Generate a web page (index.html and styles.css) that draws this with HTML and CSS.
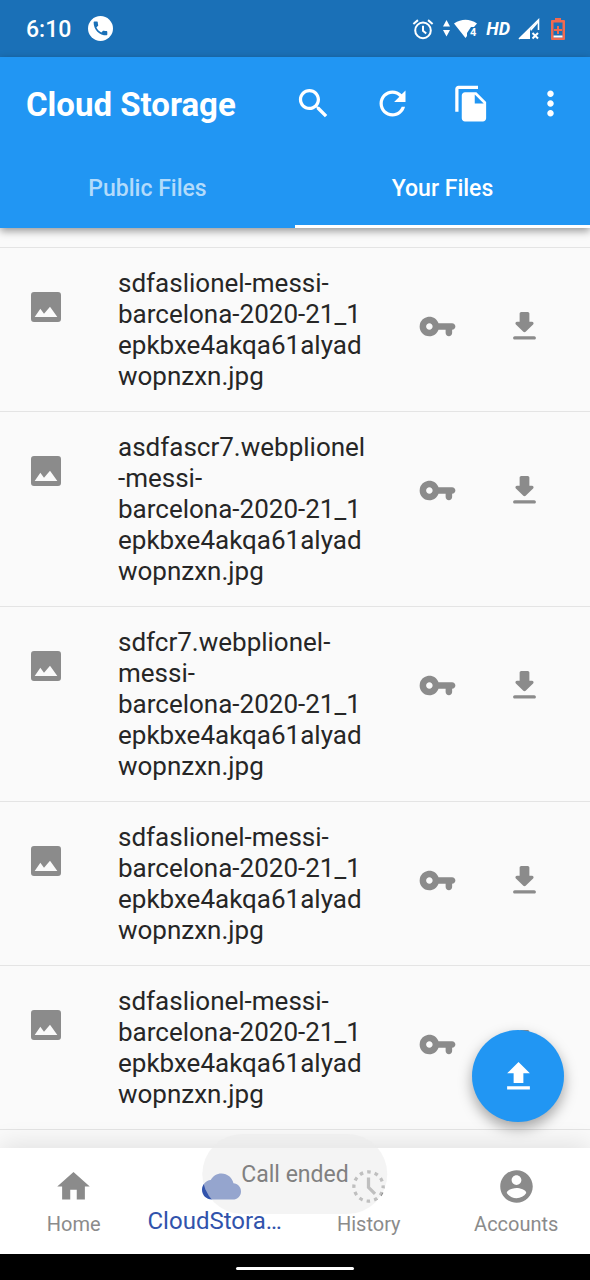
FILE: index.html
```html
<!DOCTYPE html>
<html lang="en">
<head>
<meta charset="utf-8">
<meta name="viewport" content="width=device-width, initial-scale=1">
<title>Cloud Storage</title>
<link rel="stylesheet" href="styles.css">
</head>
<body>
<svg class="sprite" aria-hidden="true">
  <symbol id="image" viewBox="0 0 90 90"><path fill-rule="evenodd" d="M9 0h72q9 0 9 9v72q0 9-9 9H9q-9 0-9-9V9q0-9 9-9zM11 75h68L57 44 39 65 28 50z"/></symbol>
  <symbol id="key" viewBox="0 0 24 24"><path d="M12.65 10C11.7 7.31 8.9 5.5 5.77 6.12c-2.29.46-4.15 2.29-4.63 4.58C.32 14.57 3.26 18 7 18c2.61 0 4.83-1.67 5.65-4H17v2c0 1.1.9 2 2 2s2-.9 2-2v-2c1.1 0 2-.9 2-2s-.9-2-2-2h-8.35zM7 14c-1.1 0-2-.9-2-2s.9-2 2-2 2 .9 2 2-.9 2-2 2z"/></symbol>
  <symbol id="download" viewBox="0 0 24 24"><path d="M16.59 9H15V4c0-.55-.45-1-1-1h-4c-.55 0-1 .45-1 1v5H7.41c-.89 0-1.34 1.08-.71 1.71l4.59 4.59c.39.39 1.02.39 1.41 0l4.59-4.59c.63-.63.19-1.71-.7-1.71zM5 19c0 .55.45 1 1 1h12c.55 0 1-.45 1-1s-.45-1-1-1H6c-.55 0-1 .45-1 1z"/></symbol>
</svg>
<div class="app">
  <div class="status">
    <div class="status-group">
      <span class="clock">6:10</span>
      <svg class="call" viewBox="0 0 24 24"><circle cx="12" cy="12" r="12" fill="#fff"/><path transform="translate(3.200 3.200) scale(.73)" fill="#1a70b7" d="M20 15.500c-1.200 0-2.400-.2-3.600-.6-.3-.1-.7 0-1 .2l-2.200 2.200c-2.800-1.400-5.100-3.800-6.600-6.600l2.200-2.200c.3-.3.4-.7.2-1C8.700 6.400 8.500 5.200 8.500 4c0-.6-.4-1-1-1H4c-.6 0-1 .4-1 1 0 9.400 7.600 17 17 17 .6 0 1-.4 1-1v-3.500c0-.6-.4-1-1-1z"/></svg>
    </div>
    <div class="status-group status-right">
      <svg class="alarm" viewBox="0 0 24 24"><g fill="none" stroke="#fff" stroke-width="2.200"><circle cx="12" cy="13.500" r="8.500"/><path d="M12 8.500v5.500l3.500 3M1.500 6.500l5-4.200M22.500 6.500l-5-4.200"/></g></svg>
      <svg class="wifi" viewBox="0 0 36 22"><path fill="#fff" d="M1 8.500 4.500 2 8 8.500zM1 12h7l-3.500 6.500zM12 5.500Q23.500-2 35 5.500L32 9h-3l-4 6v3l-1.500 2z"/><text x="28" y="18" class="tiny">4</text></svg>
      <span class="hd">HD</span>
      <svg class="signal" viewBox="0 0 22 22"><path d="M1 21 20.500 2v10" fill="none" stroke="#fff" stroke-width="1.600"/><path d="M1 21 12 10.500V21zM12 11l8-8v2l-7 8z" fill="#fff"/><path d="m14.500 15 5.500 5.500m0-5.500-5.500 5.500" stroke="#fff" stroke-width="2"/></svg>
      <svg class="battery" viewBox="0 0 14 22"><path fill="#f06a50" fill-rule="evenodd" d="M4 0h6v2h3q1 0 1 1v18q0 1-1 1H1q-1 0-1-1V3q0-1 1-1h3zM2.500 4.500v15h9v-15z"/><path fill="#f06a50" d="M6 8h2v3h3v2H8v3H6v-3H3v-2h3z"/><path fill="#fff" d="M2.500 17.500h9v2h-9z"/></svg>
    </div>
  </div>

  <header class="header">
    <div class="toolbar">
      <h1 class="title">Cloud Storage</h1>
      <button class="tool" aria-label="Search"><svg viewBox="0 0 24 24"><path d="M15.500 14h-.79l-.28-.27C15.410 12.590 16 11.110 16 9.500 16 5.910 13.090 3 9.500 3S3 5.910 3 9.500 5.910 16 9.500 16c1.610 0 3.090-.59 4.230-1.570l.27.28v.79l5 4.990L20.490 19l-4.990-5zm-6 0C7.010 14 5 11.990 5 9.500S7.010 5 9.500 5 14 7.010 14 9.500 11.990 14 9.500 14z"/></svg></button>
      <button class="tool" aria-label="Refresh"><svg viewBox="0 0 24 24"><path d="M17.650 6.350C16.200 4.900 14.210 4 12 4c-4.420 0-7.990 3.580-7.990 8s3.570 8 7.990 8c3.730 0 6.840-2.550 7.730-6h-2.080c-.82 2.330-3.040 4-5.650 4-3.310 0-6-2.690-6-6s2.690-6 6-6c1.660 0 3.140.69 4.220 1.780L13 11h7V4l-2.350 2.350z"/></svg></button>
      <button class="tool" aria-label="Copy files"><svg viewBox="0 0 24 24"><path d="M16 1H4c-1.100 0-2 .9-2 2v14h2V3h12V1zm-1 4 6 6v10c0 1.100-.9 2-2 2H7.990C6.890 23 6 22.100 6 21l.01-14c0-1.100.89-2 1.990-2h7zm-1 7h5.500L14 6.500V12z"/></svg></button>
      <button class="tool" aria-label="More options"><svg viewBox="0 0 24 24"><path d="M12 8c1.100 0 2-.9 2-2s-.9-2-2-2-2 .9-2 2 .9 2 2 2zm0 2c-1.100 0-2 .9-2 2s.9 2 2 2 2-.9 2-2-.9-2-2-2zm0 6c-1.100 0-2 .9-2 2s.9 2 2 2 2-.9 2-2-.9-2-2-2z"/></svg></button>
    </div>
    <div class="tabs" role="tablist">
      <button class="tab" role="tab" aria-selected="false">Public Files</button>
      <button class="tab tab-active" role="tab" aria-selected="true">Your Files</button>
    </div>
  </header>

  <main class="content">
    <ul class="files">
      <li class="file">
        <svg class="thumb"><use href="#image"/></svg>
        <span class="name">sdfaslionel-messi-<br>barcelona-2020-21_1<br>epkbxe4akqa61alyad<br>wopnzxn.jpg</span>
        <button class="action" aria-label="Key"><svg><use href="#key"/></svg></button>
        <button class="action" aria-label="Download"><svg><use href="#download"/></svg></button>
      </li>
      <li class="file">
        <svg class="thumb"><use href="#image"/></svg>
        <span class="name">asdfascr7.webplionel<br>-messi-<br>barcelona-2020-21_1<br>epkbxe4akqa61alyad<br>wopnzxn.jpg</span>
        <button class="action" aria-label="Key"><svg><use href="#key"/></svg></button>
        <button class="action" aria-label="Download"><svg><use href="#download"/></svg></button>
      </li>
      <li class="file">
        <svg class="thumb"><use href="#image"/></svg>
        <span class="name">sdfcr7.webplionel-<br>messi-<br>barcelona-2020-21_1<br>epkbxe4akqa61alyad<br>wopnzxn.jpg</span>
        <button class="action" aria-label="Key"><svg><use href="#key"/></svg></button>
        <button class="action" aria-label="Download"><svg><use href="#download"/></svg></button>
      </li>
      <li class="file">
        <svg class="thumb"><use href="#image"/></svg>
        <span class="name">sdfaslionel-messi-<br>barcelona-2020-21_1<br>epkbxe4akqa61alyad<br>wopnzxn.jpg</span>
        <button class="action" aria-label="Key"><svg><use href="#key"/></svg></button>
        <button class="action" aria-label="Download"><svg><use href="#download"/></svg></button>
      </li>
      <li class="file">
        <svg class="thumb"><use href="#image"/></svg>
        <span class="name">sdfaslionel-messi-<br>barcelona-2020-21_1<br>epkbxe4akqa61alyad<br>wopnzxn.jpg</span>
        <button class="action" aria-label="Key"><svg><use href="#key"/></svg></button>
        <button class="action" aria-label="Download"><svg><use href="#download"/></svg></button>
      </li>
    </ul>
    <button class="fab" aria-label="Upload"><svg viewBox="0 0 24 24"><path d="M9 16h6v-6h4l-7-7-7 7h4zm-4 2h14v2H5z"/></svg></button>
  </main>

  <nav class="nav">
    <a class="nav-item" href="#home"><svg viewBox="0 0 24 24"><path d="M10 20v-6h4v6h5v-8h3L12 3 2 12h3v8z"/></svg>Home</a>
    <a class="nav-item nav-active" href="#storage"><svg viewBox="0 0 24 24"><path d="M19.350 10.040C18.670 6.590 15.640 4 12 4 9.110 4 6.600 5.640 5.350 8.040 2.340 8.360 0 10.910 0 14c0 3.310 2.690 6 6 6h13c2.760 0 5-2.240 5-5 0-2.640-2.050-4.780-4.650-4.960z"/></svg><span class="nav-label">CloudStora…</span></a>
    <a class="nav-item" href="#history"><svg viewBox="0 0 24 24"><g fill="none" stroke="currentColor" stroke-width="2"><circle cx="12" cy="12" r="9" stroke-dasharray="2.200 2.512" stroke-dashoffset="1.100"/><path d="M12 6.500v6l4 4"/></g></svg>History</a>
    <a class="nav-item" href="#accounts"><svg viewBox="0 0 24 24"><path d="M12 2C6.480 2 2 6.480 2 12s4.480 10 10 10 10-4.480 10-10S17.520 2 12 2zm0 3c1.660 0 3 1.340 3 3s-1.340 3-3 3-3-1.340-3-3 1.340-3 3-3zm0 14.200c-2.500 0-4.710-1.280-6-3.220.03-1.990 4-3.080 6-3.080 1.990 0 5.970 1.090 6 3.080-1.290 1.940-3.500 3.220-6 3.220z"/></svg>Accounts</a>
    <div class="toast" role="status">Call ended</div>
  </nav>
  <div class="gesture"><div class="pill"></div></div>
</div>
</body>
</html>
```
FILE: styles.css
```css
* { box-sizing: border-box; }

body {
  margin: 0;
  background: #fafafa;
  color: #212121;
  font-family: Roboto, "Liberation Sans", sans-serif;
}

button {
  margin: 0;
  padding: 0;
  border: 0;
  background: none;
  color: inherit;
  font: inherit;
}

svg { display: block; flex: none; fill: currentColor; }

.sprite { position: absolute; width: 0; height: 0; }

.app {
  display: flex;
  flex-direction: column;
  min-height: 100vh;
}

.status {
  display: flex;
  justify-content: space-between;
  align-items: center;
  height: 57px;
  padding: 0 25px 0 26px;
  background: #1a70b7;
  color: #fff;
}

.status-group { display: flex; align-items: center; gap: 17px; }
.status-right { gap: 8px; }
.clock { font-size: 23px; font-weight: 500; line-height: 32px; padding-top: 2px; }
.call { width: 25px; height: 25px; }
.alarm { width: 22px; height: 22px; }
.wifi { width: 36px; height: 22px; }
.tiny { font: 700 11px Roboto, sans-serif; fill: #fff; }
.hd { font-size: 18px; font-weight: 700; font-style: italic; line-height: 22px; }
.signal { width: 22px; height: 22px; }
.battery { width: 14px; height: 22px; margin-left: 3px; }

.header {
  position: relative;
  z-index: 1;
  background: #2196f3;
  color: #fff;
  box-shadow: 0 3px 8px rgba(0, 0, 0, 0.4);
}

.toolbar {
  display: flex;
  align-items: center;
  gap: 40px;
  height: 92px;
  padding: 0 20px 0 26px;
}

.title { flex: 1; margin: 0; padding-top: 3px; font-size: 33px; font-weight: 700; line-height: 40px; }
.tool svg { width: 39px; height: 39px; }

.tabs { display: flex; }

.tab {
  flex: 1;
  height: 79px;
  border-top: 3px solid transparent;
  border-bottom: 3px solid transparent;
  color: #b3dbfb;
  font-size: 23px;
  font-weight: 500;
}

.tab-active { border-bottom-color: #fff; color: #fff; }

.content { position: relative; flex: 1; padding-bottom: 17px; }

.files { margin: 0; padding: 19px 0 0; list-style: none; }

.file {
  display: flex;
  align-items: flex-start;
  gap: 48px;
  padding: 20px 46px 19px 31px;
  border-top: 1px solid #e4e4e4;
  color: #8b8b8b;
}

.file:last-child { border-bottom: 1px solid #e4e4e4; }

.thumb { width: 30px; height: 30px; margin: 24px 9px 0 0; }
.name { flex: 1; min-width: 0; color: #262626; font-size: 26px; line-height: 31px; white-space: nowrap; }
.action { margin-top: 39px; }
.action svg { width: 39px; height: 39px; }

.fab {
  position: absolute;
  right: 26px;
  bottom: 26px;
  display: grid;
  place-items: center;
  width: 92px;
  height: 92px;
  border-radius: 50%;
  background: #2196f3;
  color: #fff;
  box-shadow: 0 6px 14px rgba(0, 0, 0, 0.35);
}

.fab svg { width: 39px; height: 39px; }

.nav {
  position: relative;
  display: flex;
  height: 106px;
  background: #fff;
  box-shadow: 0 -4px 24px rgba(0, 0, 0, 0.1);
}

.nav-item {
  flex: 1;
  display: flex;
  flex-direction: column;
  align-items: center;
  gap: 6px;
  padding-top: 19px;
  color: #8b8b8b;
  font-size: 20px;
  line-height: 24px;
  text-decoration: none;
}

.nav-item svg { width: 39px; height: 39px; }
.nav-active { gap: 3px; color: #3153ac; font-size: 24px; }
.nav-label { align-self: flex-start; }

.toast {
  position: absolute;
  top: -14px;
  left: 50%;
  padding: 25px 39px 23px;
  border-radius: 40px;
  background: rgba(235, 235, 235, 0.54);
  color: #808080;
  font-size: 23px;
  line-height: 32px;
  white-space: nowrap;
  transform: translateX(-50%);
}

.gesture {
  display: grid;
  place-items: center;
  height: 26px;
  padding-top: 3px;
  background: #000;
}

.pill { width: 20%; height: 3px; border-radius: 2px; background: #fff; }
```
